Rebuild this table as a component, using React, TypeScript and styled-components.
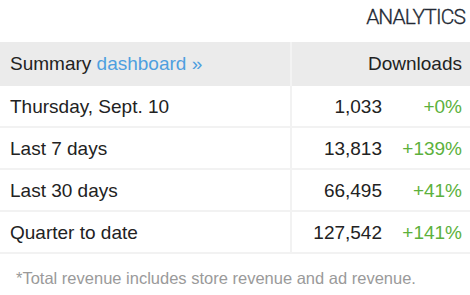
import React from 'react';
import styled, { createGlobalStyle } from 'styled-components';

const GlobalStyle = createGlobalStyle`
    body {
        margin: 0;
        background: #fff;
        font-family: "Liberation Sans", Arial, sans-serif;
    }
`

const Widget = styled.div`
    width: 470px;
    height: 295px;
    overflow: hidden;
`

const Title = styled.h2`
    margin: 0;
    height: 42px;
    padding: 5px 5px 0 0;
    box-sizing: border-box;
    text-align: right;
    font-family: "Roboto", sans-serif;
    font-weight: 300;
    font-size: 21px;
    letter-spacing: -0.9px;
    -webkit-text-stroke: 0.3px #222833;
    color: #222833;
`

const Table = styled.table`
    width: 100%;
    border-collapse: collapse;
    font-size: 19px;
    color: #222;
`

const HeadCell = styled.th<{ $right?: boolean }>`
    height: 44px;
    padding: 0 ${p => p.$right ? '8px' : '10px'};
    background: #ebebeb;
    font-weight: 400;
    text-align: ${p => p.$right ? 'right' : 'left'};
    border-left: ${p => p.$right ? '2px solid #f3f3f3' : 'none'};
`

const Row = styled.tr`
    border-bottom: 2px solid #f2f2f2;
`

const Label = styled.td`
    height: 38px;
    padding: 2px 10px 0;
    width: 270px;
`

const Count = styled.td`
    padding: 2px 0 0;
    text-align: right;
    border-left: 2px solid #f2f2f2;
`

const Change = styled.td`
    padding: 2px 8px 0 0;
    width: 80px;
    text-align: right;
    color: #5cb13c;
`

const Link = styled.a`
    color: #4e9fdf;
    text-decoration: none;
`

const Note = styled.p`
    margin: 15px 0 0 16px;
    font-size: 16.5px;
    color: #9a9a9a;
`

const rows = [
    { label: 'Thursday, Sept. 10', count: '1,033', change: '+0%' },
    { label: 'Last 7 days', count: '13,813', change: '+139%' },
    { label: 'Last 30 days', count: '66,495', change: '+41%' },
    { label: 'Quarter to date', count: '127,542', change: '+141%' },
]

const App = () => {
    return (
        <Widget>
            <GlobalStyle />
            <Title>ANALYTICS</Title>
            <Table>
                <thead>
                    <tr>
                        <HeadCell>Summary <Link href="#">dashboard »</Link></HeadCell>
                        <HeadCell $right colSpan={2}>Downloads</HeadCell>
                    </tr>
                </thead>
                <tbody>
                    {rows.map(r => (
                        <Row key={r.label}>
                            <Label>{r.label}</Label>
                            <Count>{r.count}</Count>
                            <Change>{r.change}</Change>
                        </Row>
                    ))}
                </tbody>
            </Table>
            <Note>*Total revenue includes store revenue and ad revenue.</Note>
        </Widget>
    );
};

export default App;
